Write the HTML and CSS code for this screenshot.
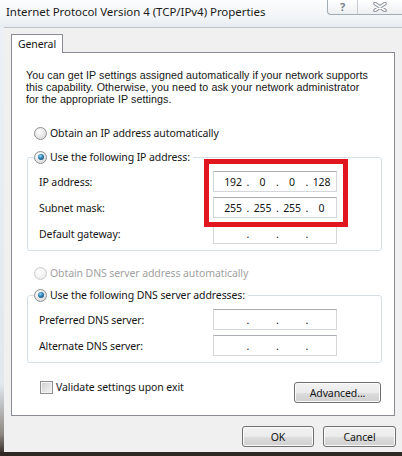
FILE: index.html
```html
<!DOCTYPE html>
<html>
<head>
<meta charset="utf-8">
<title>Internet Protocol Version 4 (TCP/IPv4) Properties</title>
<link rel="stylesheet" href="styles.css">
</head>
<body>
<div class="window">
  <div class="titlebar">
    <span class="title">Internet Protocol Version 4 (TCP/IPv4) Properties</span>
    <div class="caption">
      <span class="cap-btn help">?</span>
      <span class="cap-btn close">
        <svg width="14" height="10" viewBox="0 0 14 10">
          <path d="M2 1.5 L12 8.5 M12 1.5 L2 8.5" stroke="#878e98" stroke-width="3.6" stroke-linecap="round" fill="none"/>
          <path d="M2 1.5 L12 8.5 M12 1.5 L2 8.5" stroke="#ffffff" stroke-width="1.6" stroke-linecap="round" fill="none"/>
        </svg>
      </span>
    </div>
  </div>
  <div class="client">
    <div class="tabs"><div class="tab">General</div></div>
    <div class="panel">
      <p class="intro">You can get IP settings assigned automatically if your network supports<br>this capability. Otherwise, you need to ask your network administrator<br>for the appropriate IP settings.</p>

      <div class="option first"><span class="radio"></span><span>Obtain an IP address automatically</span></div>

      <fieldset class="group">
        <legend class="option"><span class="radio checked"></span><span>Use the following IP address:</span></legend>
        <div class="rows">
          <div class="row"><span class="lbl">IP address:</span>
            <div class="ip"><span class="seg">192</span><span class="dot">.</span><span class="seg">0</span><span class="dot">.</span><span class="seg">0</span><span class="dot">.</span><span class="seg">128</span></div>
          </div>
          <div class="row"><span class="lbl">Subnet mask:</span>
            <div class="ip"><span class="seg">255</span><span class="dot">.</span><span class="seg">255</span><span class="dot">.</span><span class="seg">255</span><span class="dot">.</span><span class="seg">0</span></div>
          </div>
          <div class="row"><span class="lbl">Default gateway:</span>
            <div class="ip"><span class="seg"></span><span class="dot">.</span><span class="seg"></span><span class="dot">.</span><span class="seg"></span><span class="dot">.</span><span class="seg"></span></div>
          </div>
          <div class="highlight"></div>
        </div>
      </fieldset>

      <div class="option disabled"><span class="radio"></span><span>Obtain DNS server address automatically</span></div>

      <fieldset class="group dns">
        <legend class="option"><span class="radio checked"></span><span>Use the following DNS server addresses:</span></legend>
        <div class="rows">
          <div class="row"><span class="lbl">Preferred DNS server:</span>
            <div class="ip"><span class="seg"></span><span class="dot">.</span><span class="seg"></span><span class="dot">.</span><span class="seg"></span><span class="dot">.</span><span class="seg"></span></div>
          </div>
          <div class="row"><span class="lbl">Alternate DNS server:</span>
            <div class="ip"><span class="seg"></span><span class="dot">.</span><span class="seg"></span><span class="dot">.</span><span class="seg"></span><span class="dot">.</span><span class="seg"></span></div>
          </div>
        </div>
      </fieldset>

      <div class="bottom">
        <div class="check"><span class="checkbox"></span><span>Validate settings upon exit</span></div>
        <button class="btn advanced">Advanced...</button>
      </div>
    </div>
    <div class="footer">
      <button class="btn ok">OK</button>
      <button class="btn cancel">Cancel</button>
    </div>
  </div>
</div>
</body>
</html>
```

FILE: styles.css
```css
html, body {
  margin: 0;
  padding: 0;
}
body {
  width: 402px;
  height: 456px;
  overflow: hidden;
  background: #2f2723;
  font-family: "Noto Sans", "Open Sans", sans-serif;
  font-size: 10.5px;
  letter-spacing: -0.1px;
  color: #151515;
}
.window {
  height: 452px;
  display: flex;
  flex-direction: column;
  background: linear-gradient(#edf1f5 0%, #e2e8ee 85%, #8d8983 96%, #3d3430 100%);
}
.titlebar {
  height: 27px;
  display: flex;
  align-items: flex-start;
  background: linear-gradient(#fbfcfd, #f1f4f7 70%, #e7ebef);
}
.title {
  font-size: 11.5px;
  letter-spacing: -0.05px;
  line-height: 18px;
  padding: 3px 0 0 6px;
  color: #1b1b1b;
  white-space: nowrap;
}
.caption {
  margin-left: auto;
  display: flex;
  height: 14px;
  border: 1px solid #a3abb5;
  border-top: 0;
  border-right: 0;
  border-bottom-left-radius: 4px;
  background: linear-gradient(#ffffff, #eceff2);
}
.cap-btn {
  display: flex;
  align-items: center;
  justify-content: center;
}
.help {
  width: 29px;
  border-right: 1px solid #c6ccd3;
  color: #7b828b;
  font-size: 11px;
  font-weight: bold;
  line-height: 14px;
}
.close {
  width: 44px;
}
.client {
  flex: 1;
  margin-left: 4px;
  border-top: 1px solid #bcc3cb;
  background: #f0f0f0;
  padding: 6px 7px 0 7px;
  display: flex;
  flex-direction: column;
}
.tabs {
  display: flex;
  height: 18px;
}
.tab {
  position: relative;
  z-index: 1;
  width: 52px;
  height: 19px;
  box-sizing: border-box;
  border: 1px solid #898c95;
  border-bottom: 0;
  background: #fff;
  text-align: center;
  line-height: 18px;
}
.panel {
  height: 364px;
  box-sizing: border-box;
  border: 1px solid #898c95;
  background: #fff;
  padding: 16px 12px 0 15px;
}
.intro {
  margin: 0 0 0 -1px;
  font-family: "Liberation Sans", Arial, sans-serif;
  font-size: 10.7px;
  letter-spacing: 0.08px;
  line-height: 12px;
  white-space: nowrap;
}
.option {
  display: flex;
  align-items: center;
  height: 16px;
  gap: 3px;
  white-space: nowrap;
}
.option.first {
  margin-top: 20px;
  padding-left: 7px;
}
.option.disabled {
  margin-top: 14px;
  padding-left: 7px;
  color: #a2a2a2;
}
.radio {
  width: 13px;
  height: 13px;
  box-sizing: border-box;
  border-radius: 50%;
  border: 1px solid #8e9296;
  background: radial-gradient(circle at 40% 35%, #ffffff 0%, #e6e6e6 55%, #cfcfcf 100%);
  position: relative;
  flex: none;
}
.radio.checked::after {
  content: "";
  position: absolute;
  left: 2.5px;
  top: 2.5px;
  width: 6px;
  height: 6px;
  border-radius: 50%;
  background: radial-gradient(circle at 40% 35%, #8fd8f8 0%, #2a7fae 45%, #0d3c59 100%);
}
.option.disabled .radio {
  border-color: #c9cbcd;
  background: radial-gradient(circle at 40% 35%, #ffffff 0%, #f1f1f1 60%, #e3e3e3 100%);
}
.group {
  margin: 8px 0 0 0;
  padding: 0;
  border: 1px solid #d5dfe5;
  border-radius: 3px;
  min-width: 0;
}
.group.dns {
  margin-top: 6px;
}
.group legend {
  margin-left: 6px;
  padding: 0 3px 0 0;
}
.rows {
  position: relative;
  padding: 6px 0 6px 11px;
  display: flex;
  flex-direction: column;
  gap: 5px;
}
.row {
  display: flex;
  align-items: center;
  height: 21px;
}
.lbl {
  width: 174px;
  white-space: nowrap;
}
.ip {
  width: 124px;
  height: 21px;
  box-sizing: border-box;
  border: 1px solid #d3d6da;
  border-top-color: #abadb3;
  display: flex;
  align-items: center;
  padding-left: 8px;
  background: #fff;
}
.seg {
  width: 22px;
  text-align: center;
}
.dot {
  width: 7.5px;
  text-align: center;
}
.highlight {
  position: absolute;
  left: 176px;
  top: -6px;
  width: 144px;
  height: 68px;
  box-sizing: border-box;
  border: 5px solid #e1161f;
}
.bottom {
  display: flex;
  justify-content: space-between;
  align-items: flex-start;
  margin-top: 19px;
  padding-left: 13px;
}
.check {
  display: flex;
  align-items: center;
  gap: 3px;
  height: 16px;
  margin-top: -3px;
  white-space: nowrap;
}
.checkbox {
  width: 13px;
  height: 13px;
  box-sizing: border-box;
  border: 1px solid #8e8f8f;
  background: linear-gradient(135deg, #cfcfcf, #f4f4f4);
  box-shadow: inset 0 0 0 1px #f3f3f3;
}
.btn {
  font-family: inherit;
  font-size: 10.5px;
  letter-spacing: -0.1px;
  color: #151515;
  height: 21px;
  padding: 0;
  box-sizing: border-box;
  border: 1px solid #707070;
  border-radius: 3px;
  background: linear-gradient(#f2f2f2 0%, #ebebeb 50%, #dddddd 51%, #cfcfcf 100%);
  box-shadow: inset 0 0 0 1px #fbfbfb;
}
.advanced {
  width: 87px;
  margin-right: 1px;
}
.footer {
  display: flex;
  justify-content: flex-end;
  gap: 9px;
  margin-top: 10px;
  margin-right: -1px;
}
.ok {
  width: 72px;
}
.cancel {
  width: 73px;
}
```
